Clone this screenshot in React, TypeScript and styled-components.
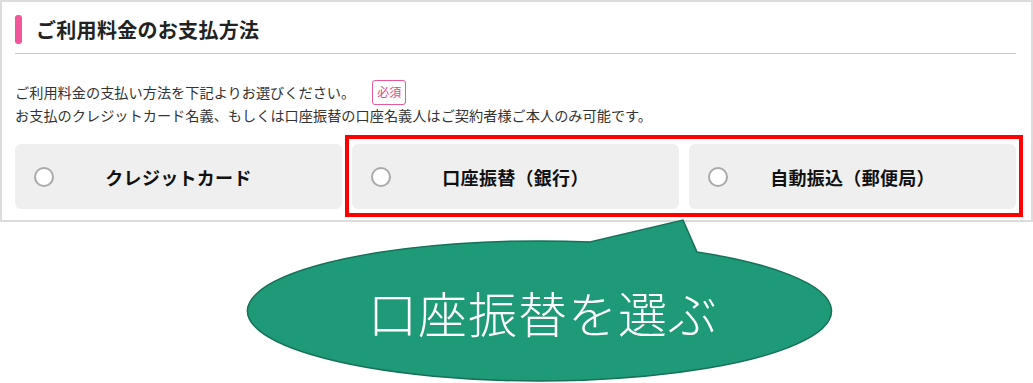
import React from "react";
import styled, { createGlobalStyle } from "styled-components";

const GlobalStyle = createGlobalStyle`
  body {
    margin: 0;
    background: #fff;
    font-family: "Noto Sans CJK JP", "Noto Sans", sans-serif;
  }
`;

const Page = styled.div`
  position: relative;
  width: 1033px;
  height: 383px;
  overflow: hidden;
`;

const Panel = styled.section`
  border: 2px solid #dcdcdc;
  padding: 12px 15px 11px 13px;
  background: #fff;
`;

const Header = styled.div`
  display: flex;
  align-items: center;
  gap: 14px;
  height: 30px;
  padding: 0 0 9px 0;
  border-bottom: 1px solid #c8c8c8;
`;

const Accent = styled.span`
  width: 7px;
  height: 29px;
  border-radius: 3px;
  background: #f2559a;
`;

const Title = styled.h2`
  margin: 0;
  font-size: 20px;
  font-weight: 700;
  color: #222;
  letter-spacing: 0.3px;
`;

const Description = styled.div`
  margin-top: 25px;
  font-size: 14.2px;
  color: #333;
`;

const Line = styled.div<{ tall?: boolean }>`
  display: flex;
  align-items: center;
  min-height: ${(p) => (p.tall ? "26px" : "20px")};
  line-height: 20px;
`;

const Required = styled.span`
  margin-left: 17px;
  display: inline-flex;
  align-items: center;
  justify-content: center;
  width: 34px;
  height: 25px;
  box-sizing: border-box;
  border: 1px solid #e8579a;
  border-radius: 3px;
  color: #e0478a;
  font-size: 12px;
`;

const Options = styled.div`
  margin-top: 19px;
  display: grid;
  grid-template-columns: repeat(3, 1fr);
  gap: 10px;
`;

const Option = styled.label`
  display: grid;
  grid-template-columns: 20px 1fr 20px;
  align-items: center;
  height: 65px;
  padding: 0 19px;
  border-radius: 6px;
  background: #efefef;
  cursor: pointer;
`;

const Radio = styled.span`
  width: 20px;
  height: 20px;
  box-sizing: border-box;
  border-radius: 50%;
  border: 2px solid #aaa;
  background: #fff;
`;

const OptionText = styled.span`
  text-align: center;
  font-size: 18px;
  font-weight: 700;
  color: #111;
  letter-spacing: 0.3px;
`;

const Highlight = styled.div`
  position: absolute;
  left: 345px;
  top: 135px;
  width: 678px;
  height: 82px;
  box-sizing: border-box;
  border: 4px solid #ff0000;
  pointer-events: none;
`;

const Callout = styled.div`
  position: absolute;
  left: 244px;
  top: 218px;
  width: 592px;
  height: 165px;
  display: flex;
  align-items: center;
  justify-content: center;
  padding: 21px 0 0 6px;
  box-sizing: border-box;
`;

const Bubble = styled.svg`
  position: absolute;
  inset: 0;
`;

const CalloutText = styled.span`
  position: relative;
  color: #fff;
  font-size: 49px;
  font-weight: 300;
  letter-spacing: 1px;
`;

const options = ["クレジットカード", "口座振替（銀行）", "自動振込（郵便局）"];

const App: React.FC = () => (
  <Page>
    <GlobalStyle />
    <Panel>
      <Header>
        <Accent />
        <Title>ご利用料金のお支払方法</Title>
      </Header>
      <Description>
        <Line tall>
          ご利用料金の支払い方法を下記よりお選びください。
          <Required>必須</Required>
        </Line>
        <Line>
          お支払のクレジットカード名義、もしくは口座振替の口座名義人はご契約者様ご本人のみ可能です。
        </Line>
      </Description>
      <Options>
        {options.map((o) => (
          <Option key={o}>
            <Radio />
            <OptionText>{o}</OptionText>
          </Option>
        ))}
      </Options>
    </Panel>
    <Highlight />
    <Callout>
      <Bubble width="592" height="165" viewBox="0 0 592 165">
        <path
          d="M 346 24 L 439 2 L 453 34 A 292 70 0 1 1 346 24 Z"
          fill="#1f9a78"
          stroke="#17705a"
          strokeWidth="1.5"
        />
      </Bubble>
      <CalloutText>口座振替を選ぶ</CalloutText>
    </Callout>
  </Page>
);

export default App;
